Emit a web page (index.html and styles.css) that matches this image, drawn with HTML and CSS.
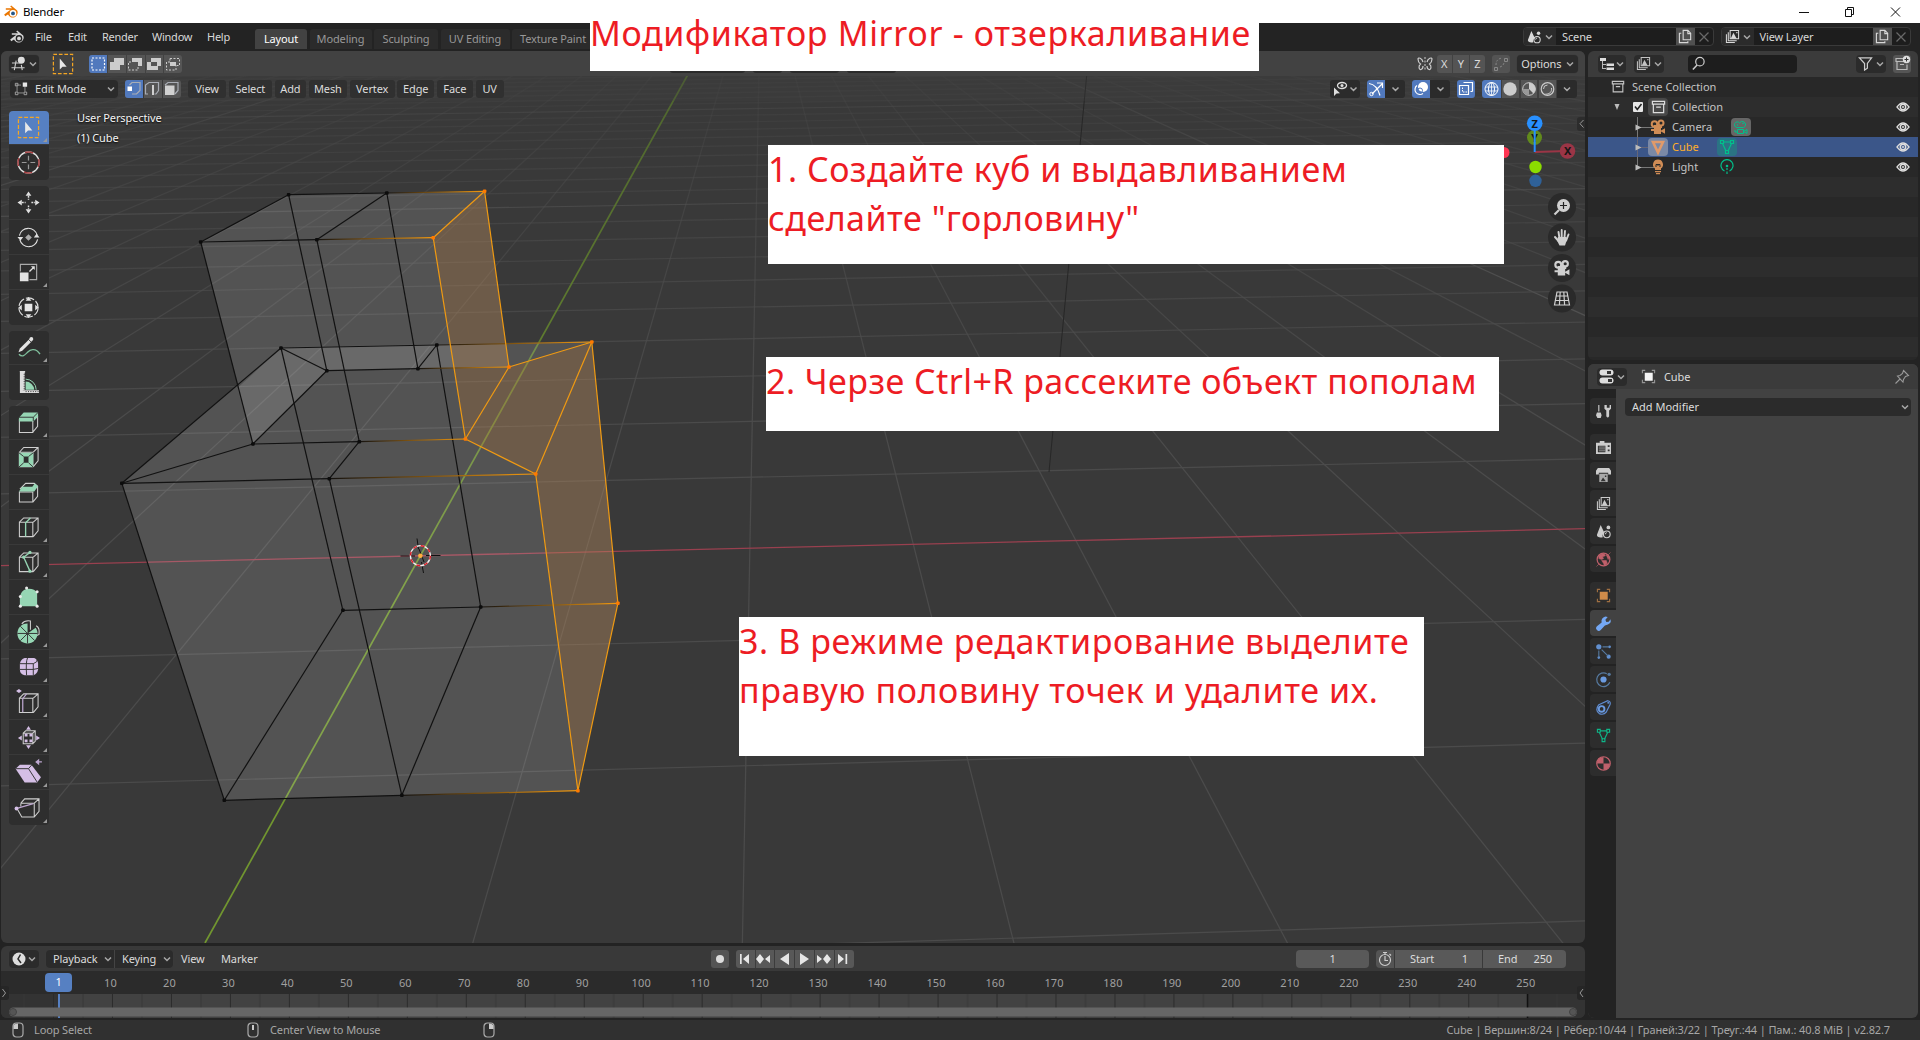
FILE: index.html
```html
<!DOCTYPE html>
<html lang="en">
<head>
<meta charset="utf-8">
<title>Blender</title>
<link rel="stylesheet" href="styles.css">
</head>
<body>
<svg class="sprite" width="0" height="0">
  <symbol id="logo" viewBox="0 0 16 16"><path d="M1.2 10.6 7.4 5.8H2.8V4.3h6.5L7.2 2.6l1-1 6 4.9A5 5 0 1 1 5 10.6l-2.8 1.6z" fill="currentColor"/><circle cx="10" cy="9.4" r="3.3" fill="var(--in,#232323)"/><circle cx="10" cy="9.4" r="1.9" fill="var(--eye,currentColor)"/></symbol>
  <symbol id="chev" viewBox="0 0 8 8"><path d="M1 2.5 4 5.5 7 2.5" fill="none" stroke="#a8a8a8" stroke-width="1.5"/></symbol>
  <symbol id="dup" viewBox="0 0 16 16"><path d="M5.5 1.5h5l3 3v7h-8zM10.5 1.5v3.4h3M3.5 4.5h-2v10h9v-1.5" fill="none" stroke="currentColor" stroke-width="1.2"/></symbol>
  <symbol id="cross" viewBox="0 0 16 16"><path d="M4 4l8 8M12 4l-8 8" stroke="#696969" stroke-width="1.1"/></symbol>
  <symbol id="scene" viewBox="0 0 16 16"><path d="M5 1 9 9.5A3.6 3.6 0 0 0 7.3 14C4 14.8.8 14 1 11.5z" fill="currentColor"/><circle cx="13.2" cy="3.6" r="2" fill="currentColor"/><circle cx="11.5" cy="11" r="3.6" fill="none" stroke="currentColor" stroke-width="1.2"/><path d="M9.8 11a1.8 1.8 0 0 1 1.8-1.8" fill="none" stroke="currentColor"/></symbol>
  <symbol id="layers" viewBox="0 0 16 16"><path d="M5.5 1.5h9v9h-9zM3.5 3.5v9h9M1.5 5.5v9h9" fill="none" stroke="currentColor" stroke-width="1.1"/><path d="M6 10.5 9 4l3.5 6.5z" fill="currentColor"/><path d="M12 3.2h1.3v1.3H12z" fill="currentColor"/></symbol>
  <symbol id="view3d" viewBox="0 0 16 16"><path d="M1 7.500h9M.5 12.500h14M5.500 5 3.500 15M11 9.500 12 15" fill="none" stroke="#ccc" stroke-width="1.2"/><circle cx="11" cy="4.500" r="3.700" fill="#ddd"/></symbol>
  <symbol id="boxsel" viewBox="0 0 24 24"><rect x="1.500" y="1.500" width="21" height="21" fill="none" stroke="#f5a623" stroke-width="1.300" stroke-dasharray="4 2"/><path d="M8.500 6v12l3-3h4.500z" fill="#e8e8e8"/></symbol>
  <symbol id="editmode" viewBox="0 0 16 16"><path d="M3.500 5v6M5 12.500h6M12.500 5v6M2 3.500h6" fill="none" stroke="#999"/><path d="M1.500 1.500h3v3h-3zM1.500 11.500h3v3h-3zM11.500 11.500h3v3h-3z" fill="none" stroke="#aaa"/><path d="M10 .5h5v5h-5z" fill="#e6e6e6"/></symbol>
  <symbol id="search" viewBox="0 0 16 16"><circle cx="9.500" cy="6" r="4.500" fill="none" stroke="#ccc" stroke-width="1.300"/><path d="M6.500 9.500 2 14.500" stroke="#ccc" stroke-width="1.600"/></symbol>
  <symbol id="coll" viewBox="0 0 16 16"><path d="M1.500 1.500h13v3h-13zM2.500 4.500h11v9h-11zM5.500 7.500h5" fill="none" stroke="currentColor" stroke-width="1.300"/></symbol>
  <symbol id="cam" viewBox="0 0 16 16"><circle cx="4.500" cy="5" r="2.800" fill="none" stroke="currentColor" stroke-width="2"/><circle cx="11" cy="4" r="2.500" fill="none" stroke="currentColor" stroke-width="2"/><path d="M4 9h7v6H4zM11 11.500l4-2.300v5.600l-4-2.300zM1 10h3v2H1zM4 6h8v3H4z" fill="currentColor"/></symbol>
  <symbol id="camline" viewBox="0 0 16 16"><path d="M4 8.500A2.800 2.800 0 1 1 6.500 4 3 3 0 1 1 12 7.500c-1 1-1.500 1-2 1zM4.500 10.500h6v4h-6zM10.500 12.500l3.500-2v4zM2 11v2h2.500" fill="none" stroke="currentColor"/><circle cx="4.500" cy="6" r=".8" fill="currentColor"/><circle cx="10" cy="4.500" r=".8" fill="currentColor"/></symbol>
  <symbol id="meshobj" viewBox="0 0 16 16"><path d="M3 3h10L8 13.500z" fill="none" stroke="currentColor" stroke-width="2.600"/></symbol>
  <symbol id="meshdata" viewBox="0 0 16 16"><path d="M4.500 3h7M3.500 4.500 7 12M12.500 4.500 9 12" fill="none" stroke="currentColor" stroke-width="1.200"/><path d="M1.500 1.500h3v3h-3zM11.500 1.500h3v3h-3zM6.500 11.500h3v3h-3z" fill="none" stroke="currentColor" stroke-width="1.200"/></symbol>
  <symbol id="bulb" viewBox="0 0 16 16"><path d="M8 .5a5 5 0 0 1 3 9V11H5V9.500a5 5 0 0 1 3-9zM5 12h6v1.200H5zM6 14h4v1.200H6z" fill="currentColor"/><path d="M6 8V5.500h4V8M6.500 5l1.500 1.500L9.500 5" fill="none" stroke="#282828"/></symbol>
  <symbol id="lightdata" viewBox="0 0 16 16"><path d="M5.500 12A6 6 0 1 1 10.500 12" fill="none" stroke="currentColor" stroke-width="1.200"/><circle cx="8" cy="7" r="1.300" fill="currentColor"/><path d="M8 9v2M8 12.500v2.500" stroke="currentColor" stroke-width="1.200"/></symbol>
  <symbol id="eye" viewBox="0 0 16 16"><path d="M2 8q6-8 12 0-6 8-12 0z" fill="none" stroke="#ddd" stroke-width="1.300"/><circle cx="8" cy="8" r="2.700" fill="none" stroke="#ddd" stroke-width="1.500"/><circle cx="8" cy="8" r="1" fill="#ddd"/></symbol>
  <symbol id="funnel" viewBox="0 0 16 16"><path d="M1.500 2h13L10 8v5l-3 2V8z" fill="none" stroke="#ccc" stroke-width="1.300"/></symbol>
  <symbol id="obj" viewBox="0 0 16 16"><path d="M1.500 4.500v-3h3M11.500 1.500h3v3M14.500 11.500v3h-3M4.500 14.500h-3v-3" fill="none" stroke="currentColor" stroke-width="1.200" opacity=".7"/><path d="M4 4h8.500v8.500H4z" fill="var(--core,currentColor)"/></symbol>
  <symbol id="mouse" viewBox="0 0 12 16"><rect x="1" y="1" width="10" height="14" rx="3.500" fill="none" stroke="#aaa" stroke-width="1.200"/></symbol>
</svg>

<header class="titlebar">
  <svg class="i16 orange-logo"><use href="#logo"/></svg><span>Blender</span>
  <svg class="winbtns" width="110" height="20"><path d="M5 10.500h10M51.500 7.500h6v7h-6zM53.500 7V5.500h6v7H58M97 5.500l9 9M106 5.500l-9 9" fill="none" stroke="#111"/></svg>
</header>

<nav class="topbar">
  <svg class="i16"><use href="#logo"/></svg>
  <div class="menus"><span>File</span><span>Edit</span><span>Render</span><span>Window</span><span>Help</span></div>
  <div class="tabs"><span class="on">Layout</span><span class="w62">Modeling</span><span class="w64">Sculpting</span><span class="w69">UV Editing</span><span class="w82">Texture Paint</span></div>
  <div class="idblocks">
    <div class="idb"><div class="pick"><svg class="i14"><use href="#scene"/></svg><svg class="i8"><use href="#chev"/></svg></div><span>Scene</span><b><svg class="i15"><use href="#dup"/></svg></b><svg class="i18"><use href="#cross"/></svg></div>
    <div class="idb"><div class="pick"><svg class="i15"><use href="#layers"/></svg><svg class="i8"><use href="#chev"/></svg></div><span>View Layer</span><b><svg class="i15"><use href="#dup"/></svg></b><svg class="i18"><use href="#cross"/></svg></div>
  </div>
</nav>

<div class="main">
  <div class="left">
    <section class="viewport">
      <svg class="scene" viewBox="1 51 1584 892" width="1584" height="892">
        <defs>
          <linearGradient id="fade" gradientUnits="userSpaceOnUse" x1="0" y1="50" x2="0" y2="420"><stop offset="0" stop-color="#4b4b4b" stop-opacity=".12"/><stop offset=".35" stop-color="#4b4b4b" stop-opacity=".5"/><stop offset="1" stop-color="#4b4b4b"/></linearGradient>
          <linearGradient id="major" gradientUnits="userSpaceOnUse" x1="0" y1="50" x2="0" y2="300"><stop offset="0" stop-color="#505050" stop-opacity=".25"/><stop offset="1" stop-color="#505050"/></linearGradient>
          <linearGradient id="axisY" gradientUnits="userSpaceOnUse" x1="0" y1="70" x2="0" y2="600"><stop offset="0" stop-color="#54702c" stop-opacity=".8"/><stop offset="1" stop-color="#71962f"/></linearGradient>
        </defs>
        <g id="grid" fill="none"></g>
        <path d="M1089 51 1049 472" stroke="#272727"/>
        <path d="M1 565.600 1585 528.700" stroke="#99404f" stroke-width="1.300"/>
        <path d="M701 51 205 943" stroke="url(#axisY)" stroke-width="1.700"/>
        <g id="mesh"></g>
        <g fill="none"><path d="M400.500 556H415M426 555.500H440.500M417 538.500 418.500 549M421.500 562 423.500 573M419 549l5 13" stroke="#111"/><circle cx="420.400" cy="555.700" r="10" stroke="#f2f2f2" stroke-width="1.300"/><circle cx="420.400" cy="555.700" r="10" stroke="#e01b24" stroke-width="1.400" stroke-dasharray="3.927"/></g>
        <circle cx="420.400" cy="555.700" r="2.300" fill="#ffae3d"/>
        <g stroke-width="2"><circle cx="1504" cy="152.500" r="5.500" fill="#ff3653"/><circle cx="1535.500" cy="167" r="6.200" fill="#8bdc00"/><circle cx="1535.500" cy="180.800" r="6.200" fill="#2f6198"/><path d="M1534.700 152 1567 151" stroke="#9b3546"/><circle cx="1567.500" cy="151" r="7.800" fill="#9b3546"/><circle cx="1534.500" cy="137.500" r="7.500" fill="#628b1c"/></g>
        <g class="axis" text-anchor="middle"><text x="1534.500" y="141.500">Y</text></g>
        <circle cx="1534.700" cy="123.300" r="7.800" fill="#2890ff"/><path d="M1534.700 123V152" stroke="#2890ff" stroke-width="2"/>
        <g class="axis" text-anchor="middle"><text x="1567.500" y="155">X</text><text x="1534.700" y="127.500">Z</text></g>
        <g transform="translate(1562 207)"><circle r="14" fill="#2a2a2a"/><circle cx="1.500" cy="-1.500" r="6.500" fill="#d0d0d0"/><path d="M-3 3-7.500 7.500" stroke="#d0d0d0" stroke-width="2.200"/><path d="M-2 -1.500H5M1.500 -5V2" stroke="#222" stroke-width="1.200"/></g>
        <g transform="translate(1562 237.500)"><circle r="14" fill="#2a2a2a"/><path d="M-3.500-5.500-2.500 1M-.3-7.500V0M3-6.500 2.400 1M6.500-3 4.200 3M-7-.5-3.500 3.500" stroke="#d0d0d0" stroke-width="1.900" stroke-linecap="round"/><path d="M-4-.5H4.500L5 2 3 8H-2.500L-5 3z" fill="#d0d0d0"/></g>
        <g transform="translate(1562 268)"><circle r="14" fill="#2a2a2a"/><use href="#cam" x="-8.500" y="-8.500" width="17" height="17" color="#d0d0d0"/></g>
        <g transform="translate(1562 298.500)"><circle r="14" fill="#2a2a2a"/><path d="M-5-6.500H5L7.500 6.500H-7.500zM-1.800-6.500-2.600 6.500M1.800-6.500 2.600 6.500M-6-2.500H6M-6.500 2H6.500" fill="none" stroke="#d0d0d0" stroke-width="1.200"/></g>
        <rect x="1577" y="117" width="12" height="14" rx="3" fill="#2c2c2c"/><path d="M1583.500 120 1580 123.700 1583.500 127.500" fill="none" stroke="#999"/>
      </svg>

      <div class="toolheader">
        <div class="dark w30"><svg class="i15"><use href="#view3d"/></svg><svg class="i8"><use href="#chev"/></svg></div>
        <svg class="selicon" width="22" height="22"><use href="#boxsel"/></svg>
        <svg class="modes" width="93" height="18"><rect width="93" height="18" rx="3" fill="#555"/><path d="M3 0h15v18H3a3 3 0 0 1-3-3V3a3 3 0 0 1 3-3z" fill="#5179bd"/><path d="M18.500 0v18M37.500 0v18M56.500 0v18M74.500 0v18" stroke="#424242"/><rect x="3" y="3" width="12.500" height="12" fill="none" stroke="#fff" stroke-width="1.200" stroke-dasharray="2 1.500"/><path d="M25 3h10v7h-4v5H21V7h4z" fill="#ccc"/><path d="M43 3h10v8h-4V7h-6z" fill="#ccc"/><path d="M42 7h-2.500v8H49v-4" fill="none" stroke="#ccc" stroke-dasharray="2 1.500"/><path d="M62 3h10v8h-3v4H58V7h4zM62 7v4h6V7z" fill="#ccc" fill-rule="evenodd"/><path d="M81 3.500h9.500v7H87M81 3.500V7h-3.500v8H87v-4" fill="none" stroke="#ccc" stroke-dasharray="2 1.500"/><path d="M81 7h6v4h-6z" fill="#ccc"/></svg>
        <div class="mid"><i class="w75"></i><i class="w29"></i><i class="w49"></i><i class="w49"></i></div>
        <div class="rightgrp">
          <svg width="16" height="16" viewBox="0 0 16 16"><path d="M8 1v14" stroke="#ccc" stroke-dasharray="2 1.500"/><path d="M6 6C5 2 1 1 1 3s1 4 2.500 5C1 10 2 14 4 13.500S6 11 6 10M10 6c1-4 5-5 5-3s-1 4-2.500 5c2.500 2 1.500 6-.5 5.500S10 11 10 10" fill="none" stroke="#ccc" stroke-width="1.200"/></svg>
          <div class="xyz"><span>X</span><span>Y</span><span>Z</span></div>
          <svg class="snap" width="18" height="18"><rect width="18" height="18" rx="3" fill="#535353"/><path d="M4 10q0-6 6-7" fill="none" stroke="#888" stroke-dasharray="2 1.500"/><path d="M2.500 12.500h3v3h-3zM12.500 3.500h3v3h-3z" fill="none" stroke="#888"/><path d="M8 12q3-1 4-4" fill="none" stroke="#888" stroke-dasharray="2 1.500"/></svg>
          <div class="dark opt">Options<svg class="i8"><use href="#chev"/></svg></div>
        </div>
      </div>

      <div class="vheader">
        <div class="dark editmode"><svg class="i14"><use href="#editmode"/></svg><span>Edit Mode</span><svg class="i8"><use href="#chev"/></svg></div>
        <svg class="selmodes" width="56" height="18"><rect width="56" height="18" rx="3" fill="#555"/><path d="M3 0h15v18H3a3 3 0 0 1-3-3V3a3 3 0 0 1 3-3z" fill="#5179bd"/><path d="M18.500 0v18M37.500 0v18" stroke="#383838"/><path d="M4.500 5 7 2.500h8v8L11.500 14H7M23 14H20.500V5L24 2.500h9.500v8L31 14h-1.500M40 5l3-2.500h10v8L50 14" fill="none" stroke="#a9adb5" stroke-width="1.200"/><path d="M2.500 6.500h4.500v4.500H2.500z" fill="#fff"/><path d="M27 5h2v10h-2zM40 5.500h9.500V15H40z" fill="#d0d0d0"/></svg>
        <div class="vmenus"><span class="w38">View</span><span class="w43">Select</span><span class="w31">Add</span><span class="w38">Mesh</span><span class="w45">Vertex</span><span class="w37">Edge</span><span class="w36">Face</span><span class="w28">UV</span></div>
        <svg class="vright" width="248" height="18">
          <g fill="#2b2b2b"><rect width="30" height="18" rx="3"/><rect x="37" width="38" height="18" rx="3"/><rect x="82" width="38" height="18" rx="3"/><rect x="152" width="95" height="18" rx="3"/></g>
          <path d="M40 0h15v18H40a3 3 0 0 1-3-3V3a3 3 0 0 1 3-3zM85 0h15v18H85a3 3 0 0 1-3-3V3a3 3 0 0 1 3-3zM130 0h12a3 3 0 0 1 3 3v12a3 3 0 0 1-3 3h-12a3 3 0 0 1-3-3V3a3 3 0 0 1 3-3zM155 0h16v18h-16a3 3 0 0 1-3-3V3a3 3 0 0 1 3-3z" fill="#5179bd"/><path d="M171.500 0h18v18h-18zM190.500 0h17v18h-17zM208.500 0h18v18h-18z" fill="#555"/>
          <path d="M4 7.500v8.500l2.500-2.500 3.500-.3z" fill="#ddd"/><ellipse cx="12" cy="5.500" rx="4.500" ry="3" fill="none" stroke="#ddd" stroke-width="1.300"/><circle cx="12" cy="5.500" r="1.500" fill="#ddd"/>
          <path d="M39 3.500q8 1 11 12M42 14 52 4M47 3h5.500v5" fill="none" stroke="#fff" stroke-width="1.200"/><circle cx="41.500" cy="14" r="1.700" fill="none" stroke="#fff"/>
          <circle cx="93" cy="7" r="5" fill="#fff"/><path d="M87 5.500a5 5 0 1 0 6 8" fill="none" stroke="#fff" stroke-width="1.200"/><circle cx="90" cy="10.500" r="2.500" fill="none" stroke="#5179bd"/>
          <path d="M133.500 2.500h9v9M142.500 11.500h-2M129.500 5.500h9v9h-9z" fill="none" stroke="#fff" stroke-width="1.200"/><path d="M132.500 7.500v4.500h4.500" fill="none" stroke="#fff" stroke-dasharray="1.500 1"/>
          <g fill="none" stroke="#fff"><circle cx="161.500" cy="9" r="6.500"/><ellipse cx="161.500" cy="9" rx="3" ry="6.500"/><path d="M155.500 7h12M155.500 11h12M161.500 2.500v13" stroke-width=".8"/></g>
          <circle cx="180" cy="9" r="6.700" fill="#ccc"/><circle cx="199" cy="9" r="6.300" fill="#555" stroke="#ccc"/><path d="M199 9V2.700A6.300 6.300 0 0 1 203.500 13.500z" fill="#ccc"/><path d="M199 9H193a6.300 6.300 0 0 0 6 6z" fill="#999"/>
          <circle cx="217.500" cy="9" r="6.300" fill="none" stroke="#ccc" stroke-width="1.200"/><path d="M213.500 9a4 4 0 0 1 4-4M221.500 8a5 5 0 0 1-6 6" fill="none" stroke="#ccc"/>
          <path d="M20.500 7.500 23.500 10.500 26.500 7.500M62.500 7.500 65.500 10.500 68.500 7.500M107.500 7.500 110.500 10.500 113.500 7.500M234 7.500 237 10.500 240 7.500" fill="none" stroke="#aaa" stroke-width="1.500"/>
        </svg>
      </div>
      <div class="viewbody">
        <div class="toolbar">
          <div class="tg">
            <div class="sel"><svg class="t"><use href="#boxsel"/></svg></div>
            <div><svg class="t" viewBox="0 0 24 24"><circle cx="12" cy="12" r="11" fill="none" stroke="#ddd" stroke-width="1.400"/><circle cx="12" cy="12" r="11" fill="none" stroke="#a33e40" stroke-width="1.600" stroke-dasharray="8.640" stroke-dashoffset="4"/><path d="M12 5v5M12 14v5M5 12h5M14 12h5" stroke="#999" stroke-width="1.300"/></svg></div>
          </div>
          <div class="tg">
            <div><svg class="t" viewBox="0 0 24 24"><path d="M12 .5 15 5H9zM12 23.500 9 19h6zM.5 12 5 9v6zM23.500 12 19 15V9z" fill="#e0e0e0"/><path d="M12 5v4M12 15v4M5 12h4M15 12h4" stroke="#e0e0e0" stroke-width="1.500" stroke-dasharray="2 1"/></svg></div>
            <div><svg class="t" viewBox="0 0 24 24"><path d="M2.500 10A9.500 9.500 0 0 1 21 9.500M21.500 14A9.500 9.500 0 0 1 3 14.500" fill="none" stroke="#ddd" stroke-width="1.200"/><path d="M12 8.500 15.500 12 12 15.500 8.500 12z" fill="#aaa"/><path d="M.5 11.500h6l-3 4zM17.500 12h6l-3-4z" fill="#e0e0e0"/></svg></div>
            <div class="more"><svg class="t" viewBox="0 0 24 24"><path d="M3.500 11V3.500h17v16H13" fill="none" stroke="#aaa" stroke-width="1.200"/><path d="M3 12h9v9H3z" fill="#e4e4e4"/><path d="M13 11 17 7" stroke="#e4e4e4" stroke-width="1.300"/><path d="M14.500 5.500H18.500V9.500z" fill="#e4e4e4"/></svg></div>
            <div><svg class="t" viewBox="0 0 24 24"><circle cx="12" cy="12" r="10" fill="none" stroke="#ddd" stroke-width="1.200" stroke-dasharray="9 2"/><path d="M8 8h8v8H8z" fill="#e8e8e8"/><path d="M12 1 15 5H9zM12 23 9 19h6zM1.500 12 5 9v6zM22.500 12 19 15V9z" fill="#e0e0e0"/></svg></div>
          </div>
          <div class="tg">
            <div class="more"><svg class="t" viewBox="0 0 24 24"><path d="M1.500 17 3 13 13.500 2.500 16 5 5.500 15.500z" fill="#e4e4e4"/><path d="M12 3.500 15 6.500" stroke="#333"/><circle cx="15" cy="3" r="2" fill="#e4e4e4"/><path d="M2 19c4 4 7 0 9-2s8-6 13 2" fill="none" stroke="#7fbf9c" stroke-width="1.400"/></svg></div>
            <div><svg class="t" viewBox="0 0 24 24"><path d="M3 0h5.500v1.500H6V20h17v3H3z" fill="#ddd"/><path d="M9 11a9 9 0 0 1 9 8.500H9z" fill="#96d6b4"/><path d="M9 8.500a11 11 0 0 1 11 11" fill="none" stroke="#96d6b4"/><path d="M3 0h5v1H3zM4.500 1h3.500v19H4.500z" fill="#ddd"/><path d="M7.500 3v16M9 21.500h14" stroke="#2e2e2e" stroke-dasharray="1 1.500"/></svg></div>
          </div>
          <div class="tg">
            <div class="more"><svg class="t" viewBox="0 0 24 24"><path d="M2.500 9h14v13.500h-14zM16.500 22 21.500 16V5" class="wire"/><path d="M2 7 7 1.500h15V6l-5 5H2z" class="mint"/><path d="M2 6.500h15L22 1.500M17 6.500v4" class="ink"/></svg></div>
            <div><svg class="t" viewBox="0 0 24 24"><path d="M2.500 6.500h14v15h-14zM2.500 6.500 7 1.500h15v14l-5 6M17 6.500l5-5" class="wire"/><path d="M2 7h15v15H2zM7 11v6.500h5V11z" fill-rule="evenodd" class="mint"/><path d="M2 7l5 4M17 7l-5 4M2 22l5-4.500M17 22l-5-4.500" class="ink"/></svg></div>
            <div><svg class="t" viewBox="0 0 24 24"><path d="M2.500 11.500h14V22h-14zM16.500 22 21.500 16V5.500L18 2.500H9L3 8.500" class="wire"/><path d="M2 11 5.500 6H16l2.500-3.500 3.500 3-4 5.500z" class="mint"/></svg></div>
            <div class="more"><svg class="t" viewBox="0 0 24 24"><path d="M2.500 6.500h14v15h-14zM2.500 6.500 7 2h15v13.500l-5 6M17 6.500l5-4.500" class="wire"/><path d="M9 21.500V7L14 2" class="mline"/></svg></div>
            <div class="more"><svg class="t" viewBox="0 0 24 24"><path d="M2.500 6.500h14v15h-14zM2.500 6.500 7 2h15v13.500l-5 6M17 6.500l5-4.500" class="wire"/><path d="M13.500 1.500 7 6.500 13.500 21" class="mline"/><circle cx="13.500" cy="1.500" r="1.700" class="mint"/><circle cx="7" cy="6.500" r="1.700" class="mint"/><circle cx="13.500" cy="21" r="1.700" class="mint"/></svg></div>
            <div><svg class="t" viewBox="0 0 24 24"><path d="M3 21V12q1-8 7-9 8-1 11 4v14z" class="mint"/><g fill="#e8e8e8"><circle cx="3.500" cy="21" r="1.600"/><circle cx="21" cy="21" r="1.600"/><circle cx="3.500" cy="11" r="1.600"/><circle cx="10" cy="2" r="1.600"/><circle cx="21" cy="6" r="1.600"/></g></svg></div>
            <div class="more"><svg class="t" viewBox="0 0 24 24"><path d="M5 3q3-4 9-3v9M20 5q4 2 3 9l-4 2" class="wire"/><path d="M11 13 11 2.500A10.500 10.500 0 1 0 19.500 7z" class="mint"/><path d="M11 13V23.500M.5 13h21M3.500 5.500 18.500 20.500M3.500 20.500 11 13" class="ink"/></svg></div>
            <div class="more"><svg class="t" viewBox="0 0 24 24"><path d="M3 8q1-5 5-6h10q4 2 4 6v6q-1 5-5 6H8q-5-1-5-6z" class="lilac"/><path d="M3 8h14q5-2 4-4M11 2q-2 4-1 18M17 8v12M3 14h14l5-1" class="ink"/></svg></div>
            <div class="more"><svg class="t" viewBox="0 0 24 24"><path d="M2.500 7.500h14v15h-14zM2.500 7.500 7 3h15v13.500l-5 6M17 7.500l5-4.500" class="wire"/><path d="M6 22V8l4-5" class="lline"/><path d="M-1 0 2-2 5 0 2 2z" class="lilac"/></svg></div>
            <div class="more"><svg class="t" viewBox="0 0 24 24"><path d="M6.500 7.500h10v11h-10zM6.500 7.500 9 5h10v11l-2.500 2.500M16.500 7.500 19 5" class="wire"/><path d="M12 0 14.500 4h-5zM12 24 9.500 20h5zM1 12.500 5 10v5zM24 12.500 20 15v-5zM8 8h3v3H8zM13 8h3v3h-3zM8 14h3v3H8zM13 14h3v3h-3z" class="lilac"/></svg></div>
            <div class="more"><svg class="t" viewBox="0 0 24 24"><path d="M-1.500 8 3 4h12l10 13-4 5.500H8z" class="lilac"/><path d="M-1 8h13L21 22M12 8l3.500-4" class="ink"/><path d="M20 1h6M20 1l2.500-2v4z" class="lline"/></svg></div>
            <div class="more"><svg class="t" viewBox="0 0 24 24"><path d="M4 7.500 8 3h15v13l-5 6H5l-5-9M4 7.500V11M4 7.500h14M18 7.500V22M18 7.500 23 3" class="wire"/><path d="M0 13 17 8" class="lline"/><circle cx="-.5" cy="13" r="2" class="lilac"/></svg></div>
          </div>
        </div>
        <div class="viewinfo">User Perspective<br>(1) Cube</div>
      </div>
    </section>

    <section class="timeline">
      <div class="tlhead">
        <div class="dark w30"><svg class="i14" viewBox="0 0 14 14"><circle cx="7" cy="7" r="6.500" fill="#ddd"/><path d="M8.500 2.500 6 7l3 4" fill="none" stroke="#2a2a2a" stroke-width="1.500"/></svg><svg class="i8"><use href="#chev"/></svg></div>
        <div class="dark pb"><span>Playback<svg class="i8"><use href="#chev"/></svg></span><span>Keying<svg class="i8"><use href="#chev"/></svg></span></div>
        <span class="tlm">View</span><span class="tlm2">Marker</span>
        <svg class="transport" width="144" height="18"><rect width="18" height="18" rx="3" fill="#545454"/><circle cx="9" cy="9" r="4" fill="#ddd"/><rect x="25" width="118" height="18" rx="3" fill="#585858"/><path d="M44.500 0v18M63.500 0v18M83.500 0v18M103.500 0v18M123.500 0v18" stroke="#3c3c3c"/><g fill="#e6e6e6"><path d="M29 4h1.700v10H29zM38 4v10l-6-5zM49 4l4 5-4 5-4-5zM59 5v8l-5-4zM78 3v12l-9-6zM89 3v12l9-6zM106 5v8l5-4zM116 4l4 5-4 5-4-5zM127 4v10l6-5zM134.500 4h1.700v10h-1.700z"/></g></svg>
        <div class="frame">1</div>
        <div class="range"><svg class="i18" viewBox="0 0 18 18"><circle cx="9" cy="10" r="5.500" fill="none" stroke="#ccc" stroke-width="1.200"/><path d="M9 6v4.500h3M7 2.500h4M9 2.500v2M13.500 4l1.500 1.500" fill="none" stroke="#ccc" stroke-width="1.200"/></svg><span>Start<em>1</em></span><span>End<em>250</em></span></div>
      </div>
      <div class="ruler"><span>10</span><span>20</span><span>30</span><span>40</span><span>50</span><span>60</span><span>70</span><span>80</span><span>90</span><span>100</span><span>110</span><span>120</span><span>130</span><span>140</span><span>150</span><span>160</span><span>170</span><span>180</span><span>190</span><span>200</span><span>210</span><span>220</span><span>230</span><span>240</span><span>250</span></div>
      <svg class="track" width="1584" height="24"><defs><pattern id="tk" width="58.970" height="24" x="52" patternUnits="userSpaceOnUse"><path d="M.5 0v24" stroke="#2b2b2b"/><path d="M30 0v24" stroke="#363636"/></pattern></defs><rect width="1584" height="24" fill="#333"/><rect x="57" width="1469" height="24" fill="#424242"/><rect width="1584" height="24" fill="url(#tk)"/><path d="M1526.500 0v24" stroke="#111" stroke-width="1.500"/><path d="M58 0v24" stroke="#5680c2" stroke-width="2"/><rect x="8" y="13.500" width="1568" height="9" rx="4.500" fill="#666"/><circle cx="12" cy="18" r="3.500" fill="#555" stroke="#444"/><circle cx="1572" cy="18" r="3.500" fill="#555" stroke="#444"/></svg>
      <div class="playhead">1</div>
      <svg class="sidearr" width="1584" height="14"><rect x="-4" width="12" height="14" rx="3" fill="#262626"/><rect x="1576" width="12" height="14" rx="3" fill="#262626"/><path d="M1.500 3 4.500 7 1.500 11M1582 3 1579 7 1582 11" fill="none" stroke="#999"/></svg>
    </section>
  </div>

  <div class="right">
    <section class="outliner">
      <div class="ohead">
        <div class="dark w28"><svg class="i14" viewBox="0 0 14 14"><path d="M2.500 3v9M2.500 7.500H6M2.500 11.500H6" fill="none" stroke="#bbb"/><path d="M0 1h6v3H0zM6.500 6.500H14V9H6.500zM6.500 10.500H14V13H6.500z" fill="#ddd"/></svg><svg class="i8"><use href="#chev"/></svg></div>
        <div class="dark w30"><svg class="i15"><use href="#layers"/></svg><svg class="i8"><use href="#chev"/></svg></div>
        <div class="dark find"><svg class="i15"><use href="#search"/></svg></div>
        <div class="dark w30 filt"><svg class="i15"><use href="#funnel"/></svg><svg class="i8"><use href="#chev"/></svg></div>
        <svg class="newc" width="18" height="18"><rect width="18" height="18" rx="3" fill="#555"/><path d="M10 3.500H3v3h8M4 6.500v8h10v-5M7 9.500h4" fill="none" stroke="#bbb" stroke-width="1.200"/><circle cx="13.500" cy="4.500" r="3.700" fill="#ddd"/><path d="M11.500 4.500h4M13.500 2.500v4" stroke="#333"/></svg>
      </div>
      <div class="row r0"><svg class="i14"><use href="#coll"/></svg><span>Scene Collection</span></div>
      <div class="row r1 alt"><svg class="tri" viewBox="0 0 6 8"><path d="M.5 1h5L3 7z" fill="#bbb"/></svg><svg class="chk" viewBox="0 0 10 10"><rect width="10" height="10" rx="1" fill="#e6e6e6"/><path d="M2 4.500 4.300 7.500 8.500 2" fill="none" stroke="#222" stroke-width="1.600"/></svg><b class="ib hl"><svg class="i15"><use href="#coll"/></svg></b><span>Collection</span><svg class="i16 eye"><use href="#eye"/></svg></div>
      <div class="row r2"><svg class="branch" viewBox="0 0 20 20"><path d="M3.500 0v20M4 10.500h16" stroke="#777"/><path d="M1.500 7.500 7.500 10.500l-6 3z" fill="#bbb"/></svg><b class="ib og"><svg class="i16"><use href="#cam"/></svg></b><span>Camera</span><b class="ib gn camd"><svg class="i16"><use href="#camline"/></svg></b><svg class="i16 eye"><use href="#eye"/></svg></div>
      <div class="row r2 act"><svg class="branch" viewBox="0 0 20 20"><path d="M3.500 0v20M4 10.500h16" stroke="#667"/><path d="M1.500 7.500 7.500 10.500l-6 3z" fill="#bbb"/></svg><b class="ib og obb"><svg class="i16"><use href="#meshobj"/></svg></b><span>Cube</span><b class="ib gn cubd"><svg class="i16"><use href="#meshdata"/></svg></b><svg class="i16 eye"><use href="#eye"/></svg></div>
      <div class="row r2"><svg class="branch" viewBox="0 0 20 20"><path d="M3.500 0v10M4 10.500h16" stroke="#777"/><path d="M1.500 7.500 7.500 10.500l-6 3z" fill="#bbb"/></svg><b class="ib og"><svg class="i16"><use href="#bulb"/></svg></b><span>Light</span><b class="ib gn litd"><svg class="i16"><use href="#lightdata"/></svg></b><svg class="i16 eye"><use href="#eye"/></svg></div>
      <div class="rows"></div>
    </section>

    <section class="props">
      <div class="phead">
        <div class="dark w30"><svg class="i15" viewBox="0 0 15 15"><rect x=".5" y=".5" width="14" height="6" rx="3" fill="#ddd"/><rect x=".5" y="8.500" width="14" height="6" rx="3" fill="#ddd"/><path d="M8 2h4v3H8zM9 10h4v3H9z" fill="#333"/></svg><svg class="i8"><use href="#chev"/></svg></div>
        <svg class="i15 wobj"><use href="#obj"/></svg><span>Cube</span>
        <svg class="i16 pin" viewBox="0 0 16 16"><path d="M9.500 1.500 14.500 6.500 11.500 7.500 9.500 10.500 9 13 3.500 7 6 6.500 8.500 4.500zM6 10 1.500 14.500" fill="none" stroke="#999" stroke-width="1.100"/></svg>
      </div>
      <div class="pbody">
        <div class="ptabs">
          <b><svg class="i15" viewBox="0 0 16 16"><path d="M3 1v7" stroke="#ccc" stroke-width="1.200"/><path d="M1 9h4l1 3-1 3H1.500L0 12zM9 1v4l2 2v6q1.500 3 3 0V7l2-2V1h-1.500v3h-3V1z" fill="#ccc"/></svg></b>
          <b class="gap"><svg class="i15" viewBox="0 0 16 16"><path d="M0 3h4V1h5v2h7v12H0zM2 6v7h8V6z" fill="#ccc" fill-rule="evenodd"/><path d="M3 7.500h7M3 9.500h7M3 11.500h7" stroke="#999"/><path d="M12.500 5.500h2v2h-2zM12.500 10h2v2h-2z" fill="#333"/></svg></b>
          <b><svg class="i15" viewBox="0 0 16 16"><path d="M2 0h12l2 3v4h-3V5H3v2H0V3z" fill="#ccc"/><path d="M3.500 6h9v9h-9z" fill="#aaa"/><path d="M5 14l2.500-4 3 4zM9.500 8H11v1.500H9.500z" fill="#333"/></svg></b>
          <b class="lg"><svg class="i15"><use href="#layers"/></svg></b>
          <b class="lg"><svg class="i15"><use href="#scene"/></svg></b>
          <b><svg class="i15" viewBox="0 0 16 16"><circle cx="8" cy="8" r="6.800" fill="none" stroke="#c1606b" stroke-width="1.300"/><path d="M3 4q3-3 6-2l1 2-3 1 1 2-2 1-3-1zM6 9l5 0 1 3-3 3-1-3zM.5 15.500 3 13M13 3 15.500.5M11 3l3 2-1 3z" fill="#c1606b" stroke="#c1606b" stroke-width=".6"/></svg></b>
          <b class="gap oj"><svg class="i15"><use href="#obj"/></svg></b>
          <b class="on"><svg class="i15" viewBox="0 0 16 16"><path d="M1 15q-2-2 0-4l5-4q-1-5 4-6.500L12.500 1 10 4l1 2.500L13.500 6 15.500 3.500Q17 9 9.500 10L5 15q-2 2-4 0z" fill="#74a8f5"/></svg></b>
          <b><svg class="i15" viewBox="0 0 16 16"><g fill="#6290d0"><circle cx="3" cy="3" r="2.800"/><circle cx="13.500" cy="13.500" r="2.200"/><circle cx="14.500" cy="3" r="1.400"/><circle cx="3" cy="14.500" r="1.400"/></g><path d="M7 3h7M3 7v7M6 6l7 7" stroke="#56799f" stroke-width="1.200"/></svg></b>
          <b><svg class="i15" viewBox="0 0 16 16"><circle cx="8" cy="8" r="3.300" fill="#6b9be0"/><path d="M11.500 1.800A7.300 7.300 0 1 0 14.800 11" fill="none" stroke="#56799f" stroke-width="1.300"/><circle cx="14" cy="2.500" r="1.800" fill="#56799f"/></svg></b>
          <b><svg class="i15" viewBox="0 0 16 16"><path d="M3 5 12.500.8q3.500.7 2.500 4l-4 8Q8 16.500 3.500 14.500-1.500 11 3 5z" fill="none" stroke="#5f8cd0" stroke-width="1.300"/><circle cx="6" cy="9.500" r="3" fill="none" stroke="#6b9be0" stroke-width="2"/><circle cx="13" cy="3" r="1" fill="#6b9be0"/></svg></b>
          <b class="gd"><svg class="i15"><use href="#meshdata"/></svg></b>
          <b><svg class="i15" viewBox="0 0 16 16"><circle cx="8" cy="8" r="7.200" fill="none" stroke="#c1606b" stroke-width="1.300"/><path d="M8 8V1a7 7 0 0 0-7 7zM8 8v7a7 7 0 0 0 7-7z" fill="#c1606b"/></svg></b>
        </div>
        <div class="panel"><div class="addmod"><span>Add Modifier</span><svg class="i8"><use href="#chev"/></svg></div></div>
      </div>
    </section>
  </div>
</div>

<footer class="status">
  <div class="hint h1"><svg class="mi"><use href="#mouse"/><path d="M1.500 7V4Q2 1.500 6 1.500V7z" fill="#ccc"/></svg><span>Loop Select</span></div>
  <div class="hint h2"><svg class="mi"><use href="#mouse"/><path d="M5 3h2v5H5z" fill="#ccc"/></svg><span>Center View to Mouse</span></div>
  <div class="hint"><svg class="mi"><use href="#mouse"/><path d="M10.500 7V4Q10 1.500 6 1.500V7z" fill="#ccc"/></svg></div>
  <span class="stats">Cube | Вершин:8/24 | Рёбер:10/44 | Граней:3/22 | Треуг.:44 | Пам.: 40.8 MiB | v2.82.7</span>
</footer>

<div class="note n0"><p>Модификатор Mirror - отзеркаливание</p></div>
<div class="note n1"><p>1. Создайте куб и выдавливанием</p><p>сделайте "горловину"</p></div>
<div class="note n2"><p>2. Черзе Ctrl+R рассеките объект пополам</p></div>
<div class="note n3"><p>3. В режиме редактирование выделите</p><p>правую половину точек и удалите их.</p></div>
<script src="script.js"></script>
</body>
</html>
```

FILE: styles.css
```css
* { box-sizing: border-box; }
body {
  margin: 0; width: 1920px; height: 1040px; overflow: hidden; position: relative;
  display: flex; flex-direction: column; background: #232323; color: #dcdcdc;
  font: 11px/18px "Noto Sans", "Open Sans", sans-serif; letter-spacing: -.12px;
}
svg { display: block; flex: none; overflow: visible; }
b { font-weight: normal; }
.sprite { position: absolute; }
.i8 { width: 8px; height: 8px; } .i14 { width: 14px; height: 14px; } .i15 { width: 15px; height: 15px; }
.i16 { width: 16px; height: 16px; } .i18 { width: 18px; height: 18px; }

.titlebar { height: 23px; flex: none; background: #fff; color: #000; display: flex; align-items: center; padding-left: 3px; gap: 4px; font-size: 11.5px; letter-spacing: -.2px; }
.orange-logo { color: #ea7600; --in: #fff; --eye: #265787; }
.winbtns { margin-left: auto; margin-right: 16px; }

.topbar { height: 28px; flex: none; display: flex; align-items: center; padding-left: 9px; color: #d8d8d8; }
.menus { display: grid; grid-template-columns: 33px 34px 50px 55px 38px; width: 220px; padding-left: 10px; padding-bottom: 1px; letter-spacing: -.25px; }
.tabs { align-self: flex-end; display: flex; gap: 2.500px; height: 20px; margin: 0 0 2px 10px; }
.tabs span { background: #2b2b2b; color: #989898; text-align: center; line-height: 19px; border-radius: 3px 3px 0 0; width: 52px; }
.tabs .on { background: #424242; color: #fff; }
.tabs .w62 { width: 62px; } .tabs .w64 { width: 64px; } .tabs .w69 { width: 69px; } .tabs .w82 { width: 82px; }
.idblocks { margin-left: auto; display: flex; gap: 7px; padding-right: 9px; padding-bottom: 1px; }
.idb { width: 190.500px; height: 19px; background: #1d1d1d; border: 1px solid #3a3a3a; border-radius: 4px; display: flex; align-items: center; overflow: hidden; }
.idb .pick { width: 32px; height: 19px; background: #2b2b2b; display: flex; align-items: center; justify-content: space-evenly; }
.idb span { flex: 1; padding-left: 6px; }
.idb b { width: 19px; height: 19px; background: #505050; display: flex; align-items: center; justify-content: center; }

.main { flex: none; height: 967px; display: flex; padding: 0 2px 0 1px; gap: 3px; }
.left { width: 1584px; display: flex; flex-direction: column; gap: 3px; }
.viewport { height: 892px; background: #393939; border-radius: 6px; overflow: hidden; position: relative; }
.scene { position: absolute; left: 0; top: 0; }
.axis { font: bold 11px "Noto Sans", sans-serif; fill: #161616; }
.toolheader { position: relative; height: 25px; background: #424242; display: flex; align-items: center; padding: 0 7px 0 8px; }
.dark { background: #2b2b2b; border-radius: 4px; height: 18px; display: flex; align-items: center; justify-content: space-evenly; box-shadow: 0 0 0 .5px #3d3d3d; }
.w30 { width: 30px; } .w28 { width: 28px; }
.selicon { margin-left: 13px; }
.modes { margin-left: 15px; }
.mid { display: flex; gap: 8px; margin-left: 488px; }
.mid i { height: 19px; border-radius: 3px; background: #2b2b2b; }
.w75 { width: 75px; } .w29 { width: 29px; } .w49 { width: 49px; }
.rightgrp { margin-left: auto; display: flex; align-items: center; gap: 4px; }
.xyz { display: flex; gap: 1px; border-radius: 3px; overflow: hidden; }
.xyz span { width: 15.500px; height: 18px; background: #545454; text-align: center; }
.snap { margin: 0 3px; }
.opt { width: 61px; }
.vheader { position: relative; height: 25px; background: rgba(66,66,66,.25); display: flex; align-items: center; padding: 0 8px 0 9px; }
.editmode { width: 108px; padding: 0 3px 0 4px; justify-content: flex-start; gap: 7px; }
.editmode .i8 { margin-left: auto; }
.selmodes { margin-left: 7px; }
.vmenus { display: flex; gap: 2.800px; margin-left: 7px; }
.vmenus span { background: #303030; border-radius: 3px; text-align: center; height: 18px; }
.w38 { width: 38px; } .w43 { width: 43px; } .w31 { width: 31.500px; } .w45 { width: 45px; } .w37 { width: 36.500px; } .w36 { width: 36px; } .vmenus .w28 { width: 28px; }
.vright { margin-left: auto; margin-right: -1px; }
.viewbody { position: relative; display: flex; padding: 10px 0 0 8px; }
.toolbar { display: flex; flex-direction: column; gap: 6px; width: 40px; }
.tg { display: flex; flex-direction: column; gap: 1px; border-radius: 4px; overflow: hidden; background: #393939; }
.tg div { height: 34px; background: #2e2e2e; display: flex; align-items: center; justify-content: center; position: relative; padding-right: 2px; }
.tg div:first-child { height: 33px; }
.tg div:last-child { height: 35px; padding-bottom: 1px; }
.tg .sel { background: #5680c2; }
.tg .more::after, .tg .sel::after { content: ""; position: absolute; right: 2px; bottom: 2px; border: 2px solid transparent; border-right-color: #999; border-bottom-color: #999; }
.t { width: 23px; height: 23px; }
.wire { fill: none; stroke: #cfcfcf; stroke-width: 1.100; } .ink { fill: none; stroke: #333; }
.mint { fill: #96d6b4; } .mline { fill: none; stroke: #96d6b4; stroke-width: 1.400; }
.lilac { fill: #d5bfe6; } .lline { fill: none; stroke: #bda6d0; stroke-width: 1.300; }
.viewinfo { color: #f4f4f4; line-height: 20px; margin: -3px 0 0 28px; text-shadow: 0 1px 2px #000; }

.timeline { position: relative; height: 72px; border-radius: 6px; overflow: hidden; background: #393939; }
.tlhead { height: 25px; display: flex; align-items: center; padding-left: 8px; }
.pb { margin-left: 7px; width: 127px; justify-content: flex-start; }
.pb span { display: flex; align-items: center; justify-content: space-between; width: 58px; padding: 0 2px 0 7px; }
.pb span:first-child { width: 69px; border-right: 1px solid #444; }
.tlm { margin-left: 8px; width: 40px; } .tlm2 { width: 490px; }
.frame { margin-left: 441px; width: 73px; height: 18px; border-radius: 4px; background: #595959; text-align: center; }
.range { margin-left: 7px; display: flex; gap: 1px; width: 190px; height: 18px; }
.range svg { background: #545454; border-radius: 4px 0 0 4px; }
.range span { background: #595959; width: 87px; padding: 0 14px 0 15px; display: flex; justify-content: space-between; }
.range span:last-child { width: 83px; border-radius: 0 4px 4px 0; }
.range em { font-style: normal; }
.ruler { height: 23px; background: #2b2b2b; display: flex; padding-left: 80px; line-height: 23px; color: #a0a0a0; letter-spacing: .1px; }
.ruler span { width: 58.970px; text-align: center; flex: none; }
.playhead { position: absolute; left: 44px; top: 27px; width: 27px; height: 19px; border-radius: 4px; background: #5680c2; color: #fff; text-align: center; }
.sidearr { position: absolute; left: 0; top: 40px; }

.right { width: 330px; display: flex; flex-direction: column; gap: 4px; }
.outliner { height: 309px; border-radius: 6px; overflow: hidden; background: #282828; display: flex; flex-direction: column; color: #c4c4c4; }
.ohead { height: 26px; flex: none; background: #3b3b3b; display: flex; align-items: center; padding: 0 7px 1px 10px; }
.ohead .w30 { margin-left: 8px; }
.find { margin-left: 24px; width: 109px; background: #1d1d1d; justify-content: flex-start; padding-left: 3px; }
.ohead .filt { margin-left: 59px; }
.newc { margin-left: 7px; }
.row { height: 20px; flex: none; display: flex; align-items: center; padding-right: 7px; letter-spacing: 0; }
.alt { background: #2d2d2d; }
.act { background: #3b5689; } .act span { color: #ffaf29; }
.r0 { padding-left: 23px; gap: 7px; height: 20px; }
.r1 { padding-left: 26px; } .r2 { padding-left: 46px; }
.tri { width: 6px; height: 8px; margin-right: 13px; } .chk { width: 10px; height: 10px; margin-right: 5px; }
.branch { width: 14px; height: 20px; }
.r2 .branch { overflow: hidden; width: 20px; margin-right: -6px; }
.ib { width: 20px; height: 18px; border-radius: 4px; display: flex; align-items: center; justify-content: center; margin-right: 4px; z-index: 1; }
.hl { background: #484848; color: #ddd; }
.og { color: #d08c55; } .obb { background: #7a89a6; color: #e09a6a; }
.gn { color: #00c08b; } .camd { background: #666; } .cubd { background: #2b7384; }
.r2 span { width: 45px; }
.r2 .camd { margin-left: 14px; }
.eye { margin-left: auto; }
.rows { flex: 1; background: repeating-linear-gradient(#2d2d2d 0 20px, #282828 20px 40px); }

.props { height: 654px; border-radius: 6px; overflow: hidden; background: #424242; }
.phead { height: 25px; background: #3b3b3b; display: flex; align-items: center; padding: 0 8px 0 9px; }
.wobj { color: #bbb; --core: #f4f4f4; margin: 0 8px 0 14px; }
.pin { margin-left: auto; }
.pbody { display: flex; height: 629px; }
.ptabs { width: 28px; background: #232323; padding: 9px 0 0 2px; display: flex; flex-direction: column; gap: 2px; }
.ptabs b { height: 26px; background: #2d2d2d; border-radius: 4px 0 0 4px; display: flex; align-items: center; justify-content: center; }
.ptabs .gap { margin-top: 8px; } .ptabs .on { background: #424242; }
.lg { color: #ccc; } .oj { color: #d08c4a; } .gd { color: #0fb588; }
.panel { flex: 1; padding: 9px 7px 0 9px; }
.addmod { height: 18px; background: #2b2b2b; border-radius: 4px; display: flex; align-items: center; justify-content: space-between; padding: 0 2px 0 7px; letter-spacing: 0; }

.status { margin-top: 2px; height: 20px; flex: none; background: #303030; display: flex; align-items: center; padding: 0 30px 0 12px; color: #a6a6a6; line-height: 20px; }
.mi { width: 12px; height: 16px; }
.hint { display: flex; align-items: center; gap: 10px; }
.hint span { white-space: nowrap; }
.h1 { width: 235px; } .h2 { width: 236px; gap: 11px; }
.stats { margin-left: auto; }

.note { position: absolute; background: #fff; color: #ed1c24; font: 34px/49px "Noto Sans", "Open Sans", sans-serif; white-space: nowrap; }
.note p { margin: 0; }
.n0 { left: 590px; top: 9px; width: 669px; height: 62px; letter-spacing: .66px; }
.n1 { left: 768px; top: 145px; width: 736px; height: 119px; letter-spacing: .5px; }
.n2 { left: 766px; top: 357px; width: 733px; height: 74px; letter-spacing: .46px; }
.n3 { left: 739px; top: 617px; width: 685px; height: 139px; letter-spacing: .6px; }
```

FILE: script.js
```js
const NS = "http://www.w3.org/2000/svg";
const add = (parent, tag, attrs) => {
  const el = document.createElementNS(NS, tag);
  for (const k in attrs) el.setAttribute(k, attrs[k]);
  parent.appendChild(el);
};

// Perspective projection of a floor grid point (i along X, j along Y).
const project = (i, j) => {
  const w = 1 + 0.00279 * i - 0.133 * j;
  return [(420.4 + 166.84 * i - 101.27 * j) / w, (555.7 - 2.32 * i + 7.65 * j) / w];
};
const grid = document.getElementById("grid");
const line = (a, b, major) => add(grid, "line", {
  x1: a[0].toFixed(1), y1: a[1].toFixed(1), x2: b[0].toFixed(1), y2: b[1].toFixed(1),
  stroke: major ? "url(#major)" : "url(#fade)", "stroke-width": 1.2
});
for (let i = -30; i <= 50; i++) if (i) line(project(i, 5), project(i, -34), i % 10 === 0);
for (let j = -32; j <= 4; j++) if (j) line(project(-40, j), project(60, j), j % 10 === 0);

// Cube with an extruded neck: projected vertices, edges and visible faces.
const V = {
  a: [288.6, 194.7], b: [386.8, 193], c: [484.6, 191.3], d: [200.7, 242], e: [316.8, 239.7], f: [433.2, 237.7],
  g: [281, 348], h: [436.8, 345], k: [591.8, 342], l: [326.8, 370.7], m: [417.9, 368.7], n: [509, 367],
  o: [252.9, 444], p: [359.3, 441.7], q: [465.4, 439], r: [121.8, 483.3], s: [329.3, 478.7], t: [535.7, 474],
  u: [342.9, 610.3], v: [480.7, 607], w: [617.9, 603.3], x: [224.3, 800.3], y: [401.8, 795.3], z: [577.9, 790.7],
  A: [237.5, 388], B: [505.7, 343.7]
};
const mesh = document.getElementById("mesh");
const ring = s => "M" + [...s].map(c => V[c].join(" ")).join("L") + "Z";
add(mesh, "path", { d: ring("dacnqo") + ring("rgkwzx"), fill: "#fff", "fill-opacity": 0.135 });
add(mesh, "path", { d: ring("gloA") + ring("Bnlg"), fill: "#fff", "fill-opacity": 0.13 });
add(mesh, "path", { d: ring("fcnq") + ring("nktq") + ring("kwzt"), fill: "#aa6e32", "fill-opacity": 0.3 });
const edge = (s, stroke) => {
  const [p, q] = [V[s[0]], V[s[1]]];
  add(mesh, "line", { x1: p[0], y1: p[1], x2: q[0], y2: q[1], stroke, "stroke-width": 1.2 });
};
"ab ad be de do ep al bm gh gl hm lm lo op gr or ps rs gu hv rx sy uv xy ux vy".split(" ").forEach(s => edge(s, "#111"));
"bc ef hk mn pq st vw yz".split(" ").forEach(s => {
  const [p, q] = [V[s[0]], V[s[1]]];
  add(mesh, "linearGradient", { id: "g" + s, gradientUnits: "userSpaceOnUse", x1: p[0], y1: p[1], x2: q[0], y2: q[1] });
  const g = mesh.lastChild;
  add(g, "stop", { offset: 0, "stop-color": "#141210" });
  add(g, "stop", { offset: 1, "stop-color": "#f39a10" });
  edge(s, `url(#g${s})`);
});
"cf cn fq kn nq kt qt kw tz wz".split(" ").forEach(s => edge(s, "#f09a12"));
for (const k of "abcdefghklmnopqrstuvwxyz") {
  if (!V[k]) continue;
  add(mesh, "rect", { x: V[k][0] - 1.8, y: V[k][1] - 1.8, width: 3.6, height: 3.6, rx: 1, fill: "cfknqtwz".includes(k) ? "#ff7a00" : "#0c0c0c" });
}
```
